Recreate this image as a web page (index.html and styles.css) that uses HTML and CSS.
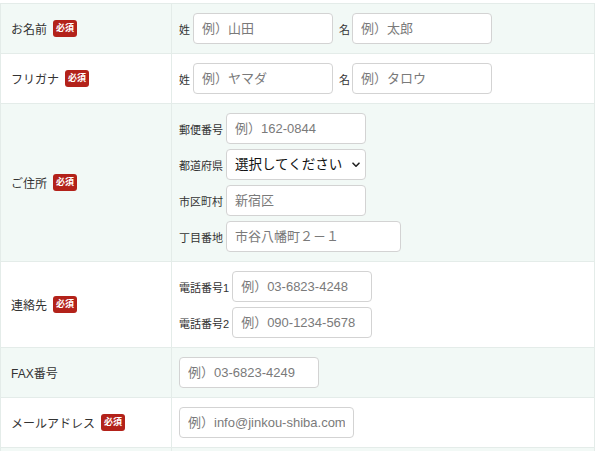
FILE: index.html
```html
<!DOCTYPE html>
<html lang="ja">
<head>
<meta charset="utf-8">
<link rel="stylesheet" href="styles.css">
</head>
<body>
<table class="form">
  <tr class="alt">
    <th><span class="lbl">お名前</span><span class="req">必須</span></th>
    <td>
      <div class="line">
        <span class="sub">姓</span><input class="inp" placeholder="例）山田">
        <span class="sub sub2">名</span><input class="inp" placeholder="例）太郎">
      </div>
    </td>
  </tr>
  <tr>
    <th><span class="lbl">フリガナ</span><span class="req">必須</span></th>
    <td>
      <div class="line">
        <span class="sub">姓</span><input class="inp" placeholder="例）ヤマダ">
        <span class="sub sub2">名</span><input class="inp" placeholder="例）タロウ">
      </div>
    </td>
  </tr>
  <tr class="alt">
    <th><span class="lbl">ご住所</span><span class="req">必須</span></th>
    <td>
      <div class="stack">
        <div class="line"><span class="sub">郵便番号</span><input class="inp" placeholder="例）162-0844"></div>
        <div class="line"><span class="sub">都道府県</span>
          <div class="selwrap">
            <select class="sel"><option>選択してください</option></select>
            <svg class="chev" width="8" height="6" viewBox="0 0 8 6"><path d="M1 1.2 L4 4.2 L7 1.2" fill="none" stroke="#222" stroke-width="1.6" stroke-linecap="round" stroke-linejoin="round"/></svg>
          </div>
        </div>
        <div class="line"><span class="sub">市区町村</span><input class="inp" placeholder="新宿区"></div>
        <div class="line"><span class="sub">丁目番地</span><input class="inp wide" placeholder="市谷八幡町２－１"></div>
      </div>
    </td>
  </tr>
  <tr>
    <th><span class="lbl">連絡先</span><span class="req">必須</span></th>
    <td>
      <div class="stack">
        <div class="line"><span class="sub">電話番号1</span><input class="inp" placeholder="例）03-6823-4248"></div>
        <div class="line"><span class="sub">電話番号2</span><input class="inp" placeholder="例）090-1234-5678"></div>
      </div>
    </td>
  </tr>
  <tr class="alt">
    <th><span class="lbl">FAX番号</span></th>
    <td><div class="line"><input class="inp" placeholder="例）03-6823-4249"></div></td>
  </tr>
  <tr>
    <th><span class="lbl">メールアドレス</span><span class="req">必須</span></th>
    <td><div class="line"><input class="inp wide" placeholder="例）info@jinkou-shiba.com"></div></td>
  </tr>
  <tr class="alt">
    <th>&nbsp;</th>
    <td><div class="line"><input class="inp"></div></td>
  </tr>
</table>
</body>
</html>
```

FILE: styles.css
```css
html, body {
  margin: 0;
  padding: 0;
  background: #fff;
}
body {
  padding-top: 3px;
  font-family: "Liberation Sans", "Noto Sans CJK JP", sans-serif;
  color: #333;
}
.form {
  border-collapse: collapse;
  width: 595px;
}
.form th, .form td {
  border: 1px solid #e4ece9;
  padding: 9px 7px;
  vertical-align: middle;
}
.form th {
  width: 153px;
  text-align: left;
  font-weight: normal;
  padding-left: 10px;
  font-size: 12px;
}
.alt th, .alt td {
  background: #f2f9f6;
}
.lbl {
  display: inline-block;
  vertical-align: middle;
}
.req {
  display: inline-block;
  vertical-align: middle;
  margin-left: 6px;
  width: 24px;
  text-align: center;
  background: #b3221a;
  color: #fff;
  font-size: 9px;
  font-weight: bold;
  line-height: 17px;
  height: 17px;
  border-radius: 3px;
}
.stack {
  display: flex;
  flex-direction: column;
  gap: 5px;
}
.line {
  display: flex;
  align-items: center;
}
.sub {
  font-size: 11px;
  margin-right: 3px;
  color: #333;
}
.sub2 {
  margin-left: 6px;
  margin-right: 2px;
}
.inp {
  box-sizing: border-box;
  width: 140px;
  height: 31px;
  border: 1px solid #d3d3d3;
  border-radius: 4px;
  background: #fff;
  padding: 0 8px;
  font-family: "Liberation Sans", "Noto Sans CJK JP", sans-serif;
  font-size: 13px;
  color: #333;
  margin: 0;
}
.inp::placeholder {
  color: #7a7a7a;
}
.inp.wide {
  width: 175px;
}
.selwrap {
  position: relative;
  width: 140px;
  height: 31px;
}
.sel {
  -webkit-appearance: none;
  appearance: none;
  box-sizing: border-box;
  width: 140px;
  height: 31px;
  border: 1px solid #d3d3d3;
  border-radius: 4px;
  background: #fff;
  padding: 0 18px 0 8px;
  font-family: "Liberation Sans", "Noto Sans CJK JP", sans-serif;
  font-size: 13.5px;
  color: #111;
  margin: 0;
}
.chev {
  position: absolute;
  right: 6px;
  top: 13px;
  pointer-events: none;
}
```
